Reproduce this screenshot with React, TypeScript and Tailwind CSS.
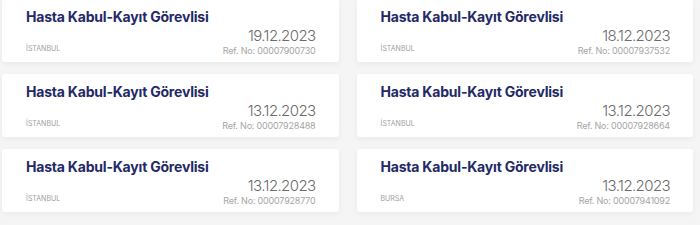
import React from 'react'

type Job = {
    title: string
    city: string
    date: string
    refNo: string
}

const jobs: Job[] = [
    { title: 'Hasta Kabul-Kayıt Görevlisi', city: 'İstanbul', date: '19.12.2023', refNo: '00007900730' },
    { title: 'Hasta Kabul-Kayıt Görevlisi', city: 'İstanbul', date: '18.12.2023', refNo: '00007937532' },
    { title: 'Hasta Kabul-Kayıt Görevlisi', city: 'İstanbul', date: '13.12.2023', refNo: '00007928488' },
    { title: 'Hasta Kabul-Kayıt Görevlisi', city: 'İstanbul', date: '13.12.2023', refNo: '00007928664' },
    { title: 'Hasta Kabul-Kayıt Görevlisi', city: 'İstanbul', date: '13.12.2023', refNo: '00007928770' },
    { title: 'Hasta Kabul-Kayıt Görevlisi', city: 'Bursa', date: '13.12.2023', refNo: '00007941092' },
]

function JobCard({ title, city, date, refNo }: Job) {
    return (
        <div className="bg-white rounded-[3px] shadow-[0_2px_6px_rgba(0,0,0,0.05)] h-[63px] pl-6 pr-[23px] pt-[9px] flex flex-col">
            <h3 className="text-[14px] leading-[18px] font-bold text-[#1f2a66] tracking-[-0.2px]">{title}</h3>
            <div className="flex items-end justify-between">
                <span className="text-[7px] leading-[10px] uppercase text-[#a0a0a0] mb-[3px]">
                    {city.toLocaleUpperCase('tr-TR')}
                </span>
                <div className="flex flex-col items-end pt-px">
                    <span className="text-[15px] leading-[18px] font-light text-[#6b6b6b] tracking-[-0.6px]">{date}</span>
                    <span className="text-[9px] leading-[12px] text-[#a5a5a5] tracking-[-0.2px]">Ref. No: {refNo}</span>
                </div>
            </div>
        </div>
    )
}

export default function App() {
    return (
        <div className="w-[700px] h-[225px] overflow-hidden bg-[#f5f5f5] font-['Inter',sans-serif]">
            <div className="grid grid-cols-2 gap-x-[18px] gap-y-3 pl-[2px] pr-[7px] -mt-px">
                {jobs.map((job, i) => (
                    <JobCard key={i} {...job} />
                ))}
            </div>
        </div>
    )
}
